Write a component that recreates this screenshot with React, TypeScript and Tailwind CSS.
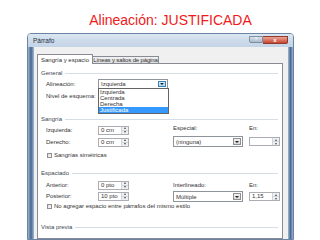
import type { ReactNode } from "react";

function SectionHeader({ label }: { label: string }) {
  return (
    <div className="flex h-[8px] items-center gap-[3px] pl-[3px] pr-[4px]">
      <span className="text-[6px] leading-none text-[#3c4652]">{label}</span>
      <div className="flex-1 border-t border-[#d5dde5]" />
    </div>
  );
}

function ArrowUp() {
  return <div className="h-0 w-0 border-x-[1.5px] border-b-[2px] border-x-transparent border-b-[#4d4d4d]" />;
}

function ArrowDown({ big = false }: { big?: boolean }) {
  return big ? (
    <div className="h-0 w-0 border-x-[2px] border-t-[2.5px] border-x-transparent border-t-[#222]" />
  ) : (
    <div className="h-0 w-0 border-x-[1.5px] border-t-[2px] border-x-transparent border-t-[#4d4d4d]" />
  );
}

function SpinInput({ value = "" }: { value?: string }) {
  return (
    <div className="flex h-[9px] w-[31px] border border-[#abadb3] bg-white">
      <span className="flex-1 pl-[2px] text-[6px] leading-[7px] text-[#333]">{value}</span>
      <div className="flex w-[7px] flex-col border-l border-[#d0d3d8] bg-[#eef0f2]">
        <div className="flex flex-1 items-center justify-center border-b border-[#d0d3d8]">
          <ArrowUp />
        </div>
        <div className="flex flex-1 items-center justify-center">
          <ArrowDown />
        </div>
      </div>
    </div>
  );
}

function Combo({
  value,
  focused = false,
  h = "h-[11px]",
  children,
}: {
  value: string;
  focused?: boolean;
  h?: string;
  children?: ReactNode;
}) {
  return (
    <div className={`relative flex ${h} w-[70px] border border-[#8e949c] bg-white`}>
      <span className="flex flex-1 items-center pl-[2px] text-[6px] leading-none text-[#333]">{value}</span>
      <div
        className={
          focused
            ? "my-[1px] mr-[1px] flex w-[8px] items-center justify-center border border-[#3c7fb1] bg-linear-to-b from-[#dff0fc] to-[#a9d6f5]"
            : "my-[1px] mr-[1px] flex w-[8px] items-center justify-center border border-[#8f8f8f] bg-linear-to-b from-[#f4f4f4] to-[#d6d6d6]"
        }
      >
        <ArrowDown big />
      </div>
      {children}
    </div>
  );
}

function Checkbox({ label }: { label: string }) {
  return (
    <div className="flex h-[8px] items-center gap-[2px] pl-[9px]">
      <div className="h-[5px] w-[5px] border border-[#8e8f8f] bg-linear-to-br from-[#dcdcdc] to-[#fafafa]" />
      <span className="whitespace-nowrap text-[6px] leading-none text-[#333]">{label}</span>
    </div>
  );
}

function Row({ label, children, h = "h-[10px]" }: { label: string; children?: ReactNode; h?: string }) {
  return (
    <div className={`flex ${h} items-center`}>
      <span className="w-[52px] whitespace-nowrap text-[6px] leading-none text-[#333]">{label}</span>
      {children}
    </div>
  );
}

const OPTIONS = ["Izquierda", "Centrada", "Derecha", "Justificada"];

export default function App() {
  return (
    <div className="h-[240px] w-[320px] overflow-hidden bg-white font-['Liberation_Sans',Arial,sans-serif]">
      {/* slide title */}
      <div className="flex h-[33px] justify-center pl-[21px] pt-[13px]">
        <span className="text-[14px] leading-[14px] text-[#f01a1a]">Alineación: JUSTIFICADA</span>
      </div>

      {/* dialog window */}
      <div className="ml-[27px] flex h-[207px] w-[267px] flex-col overflow-hidden rounded-t-[4px] border border-[#6a84a3]">
        {/* title bar */}
        <div className="flex h-[13px] items-start bg-linear-to-b from-[#dbe6f2] via-[#cddbea] to-[#c3d4e7]">
          <span className="pl-[5px] pt-[4px] text-[6.5px] leading-none text-[#1f2f45]">Párrafo</span>
          <div className="ml-auto mr-[5px] mt-[2px] flex">
            <div className="flex h-[7px] w-[14px] items-center justify-center rounded-bl-[2px] border border-[#7b8ea5] bg-linear-to-b from-[#d8e1eb] to-[#aab9ca] text-[5px] leading-none text-white">
              ?
            </div>
            <div className="flex h-[8px] w-[25px] items-center justify-center rounded-br-[2px] border border-l-0 border-[#8d3b2e] bg-linear-to-b from-[#eaa597] to-[#c7432d] text-[6px] font-bold leading-none text-white">
              x
            </div>
          </div>
        </div>

        <div className="flex flex-1">
          {/* left frame */}
          <div className="w-[6px] bg-linear-to-r from-[#9db5d2] via-[#45678f] to-[#a3bad5]" />

          {/* client area */}
          <div className="flex flex-1 flex-col bg-[#f0f0f0] pl-[3px] pr-[5px] pt-[7px]">
            {/* tabs */}
            <div className="flex h-[9px] items-end">
              <div className="relative z-10 -mb-[1px] flex h-[10px] w-[56px] items-center justify-center whitespace-nowrap border border-b-0 border-[#898c95] bg-white text-[6px] leading-none text-[#333]">
                Sangría y espacio
              </div>
              <div className="flex h-[7px] w-[66px] items-center justify-center whitespace-nowrap border border-l-0 border-b-0 border-[#898c95] bg-linear-to-b from-[#f2f2f2] to-[#dedede] text-[6px] leading-none tracking-[-0.15px] text-[#333]">
                Líneas y saltos de página
              </div>
            </div>

            {/* tab panel */}
            <div className="flex flex-1 flex-col border border-[#898c95] bg-white">
              <div className="mt-[5px]">
                <SectionHeader label="General" />
              </div>
              <div className="mt-[2px] pl-[8px]">
                <Row label="Alineación:">
                  <Combo value="Izquierda" focused h="h-[10px]">
                    <div className="absolute left-[-1px] top-full z-20 flex w-[71px] flex-col border border-[#646464] bg-white">
                      {OPTIONS.map((o) => (
                        <div
                          key={o}
                          className={
                            o === "Justificada"
                              ? "h-[6px] bg-[#3399ff] pl-[1px] text-[6px] leading-[6px] text-white"
                              : "h-[6px] pl-[1px] text-[6px] leading-[6px] text-[#333]"
                          }
                        >
                          {o}
                        </div>
                      ))}
                    </div>
                  </Combo>
                </Row>
              </div>
              <div className="mt-[3px] pl-[8px]">
                <Row label="Nivel de esquema:" h="h-[8px]" />
              </div>

              <div className="mt-[15px]">
                <SectionHeader label="Sangría" />
              </div>
              <div className="mt-[2px] flex">
                <div className="flex w-[135px] flex-col gap-[2px] pl-[8px]">
                  <Row label="Izquierda:">
                    <SpinInput value="0 cm" />
                  </Row>
                  <Row label="Derecho:">
                    <SpinInput value="0 cm" />
                  </Row>
                </div>
                <div className="flex gap-[6px]">
                  <div className="flex w-[70px] flex-col">
                    <span className="h-[7px] text-[6px] leading-[7px] text-[#333]">Especial:</span>
                    <div className="mt-[4px]">
                      <Combo value="(ninguna)" />
                    </div>
                  </div>
                  <div className="flex w-[31px] flex-col">
                    <span className="h-[7px] text-[6px] leading-[7px] text-[#333]">En:</span>
                    <div className="mt-[4px] flex h-[11px] items-center">
                      <SpinInput />
                    </div>
                  </div>
                </div>
              </div>
              <div className="mt-[4px]">
                <Checkbox label="Sangrías simétricas" />
              </div>

              <div className="mt-[10px]">
                <SectionHeader label="Espaciado" />
              </div>
              <div className="mt-[3px] flex">
                <div className="flex w-[135px] flex-col gap-[1px] pl-[8px]">
                  <Row label="Anterior:">
                    <SpinInput value="0 pto" />
                  </Row>
                  <Row label="Posterior:">
                    <SpinInput value="10 pto" />
                  </Row>
                </div>
                <div className="flex gap-[6px]">
                  <div className="flex w-[70px] flex-col">
                    <span className="h-[10px] text-[6px] leading-[10px] text-[#333]">Interlineado:</span>
                    <div className="mt-[1px]">
                      <Combo value="Múltiple" />
                    </div>
                  </div>
                  <div className="flex w-[31px] flex-col">
                    <span className="h-[10px] text-[6px] leading-[10px] text-[#333]">En:</span>
                    <div className="mt-[1px] flex h-[11px] items-center">
                      <SpinInput value="1,15" />
                    </div>
                  </div>
                </div>
              </div>
              <Checkbox label="No agregar espacio entre párrafos del mismo estilo" />

              <div className="mt-[13px]">
                <SectionHeader label="Vista previa" />
              </div>
            </div>
          </div>

          {/* right frame */}
          <div className="w-[5px] bg-linear-to-r from-[#a3bad5] via-[#4a6b93] to-[#9db5d2]" />
        </div>
      </div>
    </div>
  );
}
